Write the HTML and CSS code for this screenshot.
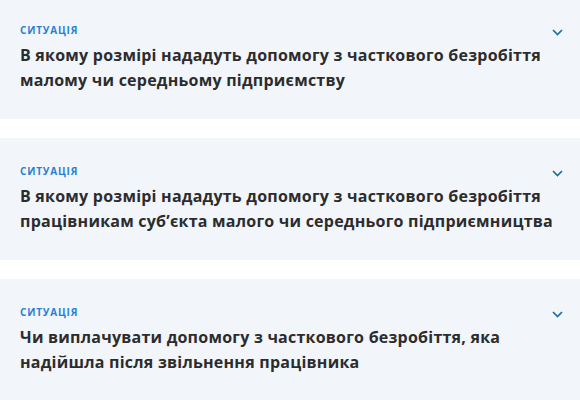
FILE: index.html
```html
<!DOCTYPE html>
<html lang="uk">
<head>
<meta charset="utf-8">
<link rel="stylesheet" href="styles.css">
</head>
<body>
<div class="list">
  <div class="card">
    <div class="head">
      <span class="label">Ситуація</span>
      <svg class="chev" width="11" height="7" viewBox="0 0 11 7"><path d="M1 1 L5.5 5.5 L10 1" fill="none" stroke="#1b6f9f" stroke-width="1.7"/></svg>
    </div>
    <div class="title">В якому розмірі нададуть допомогу з часткового безробіття малому чи середньому підприємству</div>
  </div>
  <div class="card">
    <div class="head">
      <span class="label">Ситуація</span>
      <svg class="chev" width="11" height="7" viewBox="0 0 11 7"><path d="M1 1 L5.5 5.5 L10 1" fill="none" stroke="#1b6f9f" stroke-width="1.7"/></svg>
    </div>
    <div class="title">В якому розмірі нададуть допомогу з часткового безробіття працівникам суб’єкта малого чи середнього підприємництва</div>
  </div>
  <div class="card">
    <div class="head">
      <span class="label">Ситуація</span>
      <svg class="chev" width="11" height="7" viewBox="0 0 11 7"><path d="M1 1 L5.5 5.5 L10 1" fill="none" stroke="#1b6f9f" stroke-width="1.7"/></svg>
    </div>
    <div class="title">Чи виплачувати допомогу з часткового безробіття, яка надійшла після звільнення працівника</div>
  </div>
</div>
</body>
</html>
```

FILE: styles.css
```css
html, body {
  margin: 0;
  padding: 0;
  background: #ffffff;
}
.list {
  display: flex;
  flex-direction: column;
  gap: 19px;
  margin-top: -3px;
}
.card {
  background: #f2f6fa;
  height: 122px;
  box-sizing: border-box;
  padding: 26px 17px 0 20px;
}
.head {
  display: flex;
  justify-content: space-between;
  align-items: center;
  height: 14px;
}
.label {
  font-family: "Open Sans", sans-serif;
  font-weight: 700;
  font-size: 10px;
  line-height: 14px;
  text-transform: uppercase;
  color: #2a7fd4;
  letter-spacing: 0.8px;
}
.chev {
  margin-top: 4px;
}
.title {
  margin-top: 6px;
  font-family: "Open Sans", sans-serif;
  font-weight: 700;
  font-size: 16px;
  line-height: 25px;
  letter-spacing: 0.23px;
  color: #2c2c2e;
}
```
